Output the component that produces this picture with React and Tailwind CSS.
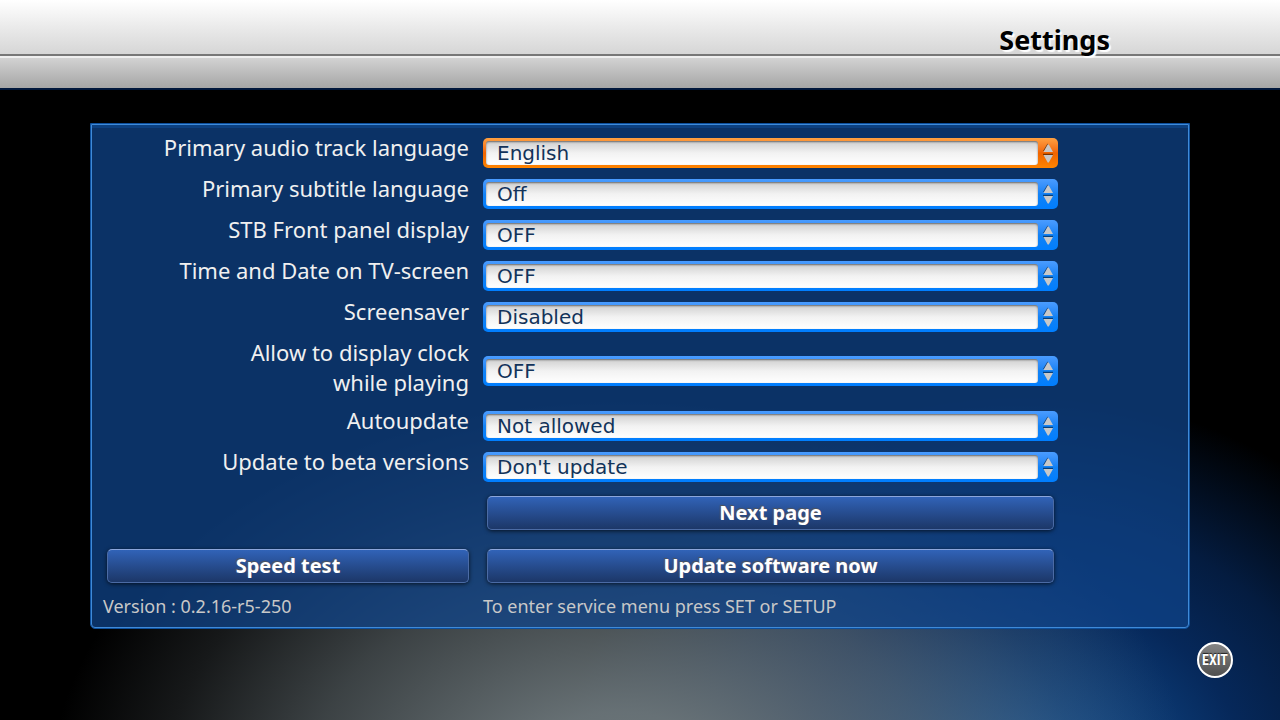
import React, { useState } from 'react';

const ROWS = [
  { id: 'audio', label: 'Primary audio track language', options: ['English', 'Russian', 'German'] },
  { id: 'subtitle', label: 'Primary subtitle language', options: ['Off', 'English', 'Russian'] },
  { id: 'panel', label: 'STB Front panel display', options: ['OFF', 'ON'] },
  { id: 'time', label: 'Time and Date on TV-screen', options: ['OFF', 'ON'] },
  { id: 'saver', label: 'Screensaver', options: ['Disabled', 'Enabled'] },
  { id: 'clock', label: 'Allow to display clock\nwhile playing', options: ['OFF', 'ON'] },
  { id: 'auto', label: 'Autoupdate', options: ['Not allowed', 'Allowed'] },
  { id: 'beta', label: 'Update to beta versions', options: ["Don't update", 'Update'] },
];

function Arrows() {
  return (
    <svg width="20" height="30" viewBox="0 0 20 30" aria-hidden="true" className="shrink-0">
      <path d="M9.500 5.500 5 13h1l4.500-6zM5 15.800h10v1.400H5z" fill="#000" opacity="0.5" />
      <path d="M9.700 6.500h1.100L15 14H5.500zM5.500 17H15l-4.200 7.500H9.700z" fill="#c8c8c8" />
    </svg>
  );
}

function SettingRow({ row, active, onFocus }) {
  return (
    <div className="grid min-h-[41px] grid-cols-[366px_1fr] items-center gap-[14px]">
      <label
        htmlFor={row.id}
        className="self-start pb-2 text-right text-[22px] leading-[30px] whitespace-pre-line text-[#f0f0f0]"
      >
        {row.label}
      </label>
      <div
        className={`flex h-[30px] items-center rounded-[5px] pl-[3px] ${
          active
            ? 'bg-linear-to-b from-[#ffa040] via-[#f06400] to-[#ff8400]'
            : 'bg-linear-to-b from-[#4a9cff] via-[#1182f5] to-[#007eff]'
        }`}
      >
        <select
          id={row.id}
          onFocus={() => onFocus(row.id)}
          className="h-6 min-w-0 flex-1 appearance-none rounded-[3px] bg-linear-to-b from-[#cfcfcf] via-[#f2f2f2] to-white pl-[11px] font-['DejaVu_Sans',sans-serif] text-[20px] leading-6 text-[#12335a] shadow-[inset_0_1px_2px_rgba(0,0,0,0.5)] outline-none"
        >
          {row.options.map(option => (
            <option key={option}>{option}</option>
          ))}
        </select>
        <Arrows />
      </div>
    </div>
  );
}

function PanelButton({ children, className = 'mx-1' }) {
  return (
    <button
      className={`h-[34px] rounded-[5px] border border-[#4b6ba5] border-t-[#8ba6dc] bg-linear-to-b from-[#3163b8] to-[#1c3768] text-[20px] leading-[30px] font-bold text-white shadow-[0_1px_4px_rgba(0,0,0,0.7)] [text-shadow:-1px_-1px_1px_#555] ${className}`}
    >
      {children}
    </button>
  );
}

export default function App() {
  const [active, setActive] = useState('audio');

  return (
    <div className="flex min-h-screen flex-col bg-black bg-[radial-gradient(ellipse_570px_400px_at_620px_110%,rgba(112,122,124,1)_0%,rgba(108,118,122,0.95)_20%,rgba(100,110,114,0.6)_55%,rgba(90,98,102,0.25)_80%,transparent_100%),radial-gradient(ellipse_460px_400px_at_1020px_110%,#1a60a8_0%,#0f4482_25%,#06285a_50%,#041c40_70%,transparent_100%)] font-['Noto_Sans',sans-serif]">
      <header className="border-b-2 border-[#02183c]">
        <div className="flex h-[56px] items-end justify-end border-b-2 border-[#777] bg-linear-to-b from-white to-[#d6d6d6] pr-[170px]">
          <h1 className="text-[27px] leading-7 font-bold text-black [text-shadow:2px_2px_1px_#fff]">Settings</h1>
        </div>
        <div className="h-8 border-t-2 border-[#efefef] bg-linear-to-b from-[#d2d2d2] to-[#a6a6a6]" />
      </header>

      <main className="mx-[90px] mt-[33px] rounded-b-[5px] border border-[#0d4f9c] bg-[rgba(15,67,136,0.75)]">
        <div className="rounded-b-[4px] border border-[#3f8ad8] pt-[7px] pr-[130px] pb-[7px] pl-[11px] shadow-[inset_0_3px_0_#0c4080]">
          {ROWS.map(row => (
            <SettingRow key={row.id} row={row} active={active === row.id} onFocus={setActive} />
          ))}
          <div className="mt-[9px] grid grid-cols-[366px_1fr] gap-x-[14px] gap-y-[19px]">
            <div />
            <PanelButton>Next page</PanelButton>
            <PanelButton className="ml-1">Speed test</PanelButton>
            <PanelButton>Update software now</PanelButton>
          </div>
          <div className="mt-[9px] grid grid-cols-[366px_1fr] gap-x-[14px] text-[18px] leading-7 text-[#c8c8c8]">
            <p>Version : 0.2.16-r5-250</p>
            <p>To enter service menu press SET or SETUP</p>
          </div>
        </div>
      </main>

      <button className="mt-[13px] mr-[47px] flex size-9 items-center justify-center self-end rounded-full border-2 border-white bg-linear-to-b from-[#858585] to-[#505050] font-['Liberation_Sans_Narrow','Roboto_Condensed','Open_Sans_Condensed',sans-serif] text-[14px] font-bold text-white [text-shadow:0_-1px_1px_#222]">
        EXIT
      </button>
    </div>
  );
}
